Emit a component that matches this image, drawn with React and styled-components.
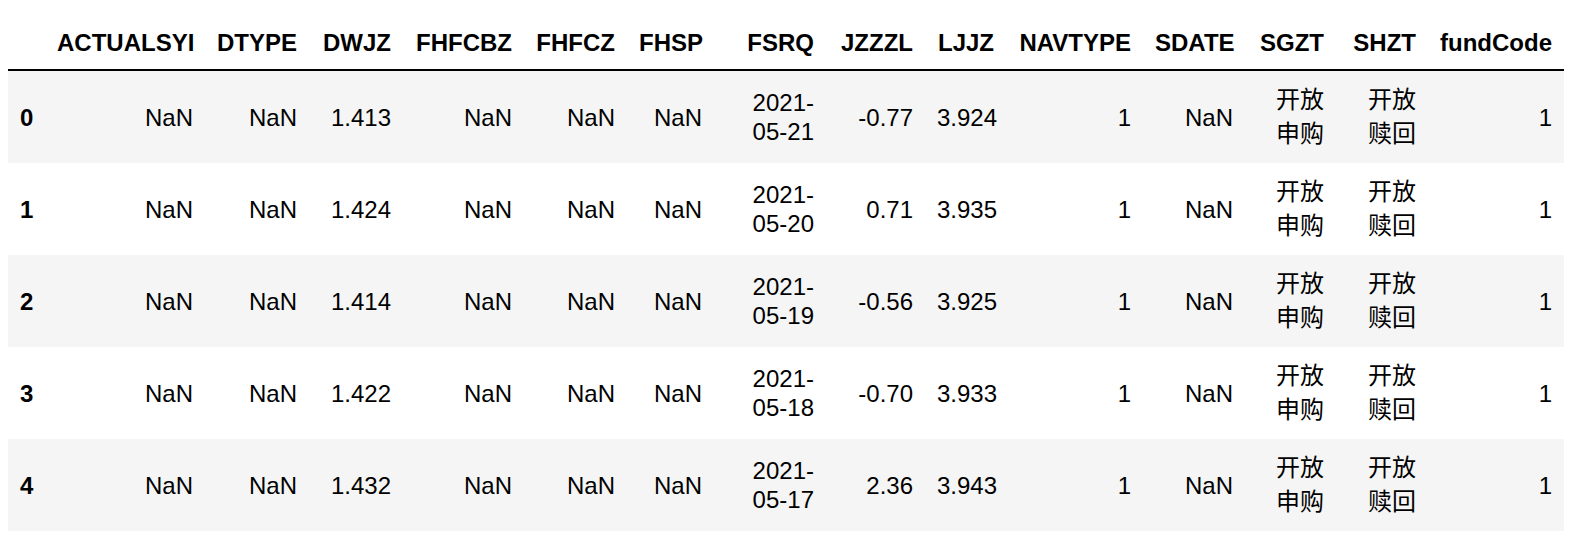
import React from "react";
import styled, { createGlobalStyle } from "styled-components";

const GlobalStyle = createGlobalStyle`
    body {
        margin: 0;
        background: #fff;
        font-family: "Liberation Sans", "Noto Sans CJK SC", sans-serif;
        color: #000;
    }
`;

const Page = styled.div`
    padding: 17px 0 0 8px;
`;

const Table = styled.table`
    table-layout: fixed;
    width: 1556px;
    border-collapse: separate;
    border-spacing: 0;
    font-size: 24px;
`;

const Col = styled.col`
    width: ${p => p.$w}px;
`;

const HeadCell = styled.th`
    padding: 12px;
    line-height: 28px;
    text-align: right;
    vertical-align: bottom;
    font-weight: bold;
    border-bottom: 2px solid #000;
    white-space: nowrap;
`;

const Row = styled.tr`
    background: ${p => (p.$striped ? "#f5f5f5" : "#fff")};
`;

const IndexCell = styled.th`
    padding: 12px;
    line-height: 29px;
    text-align: left;
    vertical-align: middle;
    font-weight: bold;
`;

const Cell = styled.td`
    padding: 12px;
    line-height: ${p => (p.$cjk ? 34 : 29)}px;
    text-align: right;
    vertical-align: middle;
    overflow-wrap: normal;
`;

const columns = [
    { name: "", w: 37 },
    { name: "ACTUALSYI", w: 160 },
    { name: "DTYPE", w: 104 },
    { name: "DWJZ", w: 94 },
    { name: "FHFCBZ", w: 121 },
    { name: "FHFCZ", w: 103 },
    { name: "FHSP", w: 87 },
    { name: "FSRQ", w: 112 },
    { name: "JZZZL", w: 99 },
    { name: "LJJZ", w: 81 },
    { name: "NAVTYPE", w: 137 },
    { name: "SDATE", w: 102 },
    { name: "SGZT", w: 91 },
    { name: "SHZT", w: 92 },
    { name: "fundCode", w: 136 }
];

const rows = [
    ["1.413", "2021-05-21", "-0.77", "3.924"],
    ["1.424", "2021-05-20", "0.71", "3.935"],
    ["1.414", "2021-05-19", "-0.56", "3.925"],
    ["1.422", "2021-05-18", "-0.70", "3.933"],
    ["1.432", "2021-05-17", "2.36", "3.943"]
];

export default function App() {
    return (
        <Page>
            <GlobalStyle />
            <Table>
                <colgroup>
                    {columns.map((c, i) => (
                        <Col key={i} $w={c.w} />
                    ))}
                </colgroup>
                <thead>
                    <tr>
                        {columns.map((c, i) => (
                            <HeadCell key={i}>{c.name}</HeadCell>
                        ))}
                    </tr>
                </thead>
                <tbody>
                    {rows.map(([dwjz, fsrq, jzzzl, ljjz], i) => (
                        <Row key={i} $striped={i % 2 === 0}>
                            <IndexCell>{i}</IndexCell>
                            <Cell>NaN</Cell>
                            <Cell>NaN</Cell>
                            <Cell>{dwjz}</Cell>
                            <Cell>NaN</Cell>
                            <Cell>NaN</Cell>
                            <Cell>NaN</Cell>
                            <Cell>{fsrq}</Cell>
                            <Cell>{jzzzl}</Cell>
                            <Cell>{ljjz}</Cell>
                            <Cell>1</Cell>
                            <Cell>NaN</Cell>
                            <Cell $cjk>开放申购</Cell>
                            <Cell $cjk>开放赎回</Cell>
                            <Cell>1</Cell>
                        </Row>
                    ))}
                </tbody>
            </Table>
        </Page>
    );
}
